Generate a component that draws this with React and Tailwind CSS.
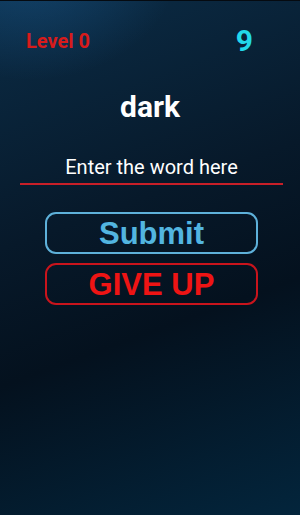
export default function App() {
    return (
        <div className="relative w-[300px] h-[515px] overflow-hidden bg-[linear-gradient(160deg,#0b2c46_0%,#07192a_40%,#04111e_62%,#03253c_100%)] font-['Roboto',sans-serif]">
            {/* top-left glow */}
            <div className="absolute -left-[120px] -top-[160px] w-[300px] h-[240px] rounded-full bg-[radial-gradient(closest-side,rgba(30,100,160,0.45),rgba(30,100,160,0))]" />
            <div className="absolute inset-x-0 top-0 h-px bg-[#050a10]" />

            <div className="relative flex flex-col">
                {/* header */}
                <div className="flex items-center justify-between pl-[26px] pr-[47px] pt-[26px] h-[56px]">
                    <span className="text-[20px] font-bold text-[#d81b1b] leading-none">Level 0</span>
                    <span className="text-[30px] font-bold text-[#22d8ea] leading-none">9</span>
                </div>

                {/* word */}
                <div className="mt-[36px] text-center text-[30px] font-bold text-white leading-none">dark</div>

                {/* input */}
                <div className="ml-[20px] mr-[17px] mt-[33px] border-b-2 border-[#c81f28] pb-[4px] text-center text-[20px] text-white leading-[24px]">
                    Enter the word here
                </div>

                {/* buttons */}
                <div className="flex flex-col gap-[9px] pl-[45px] pr-[42px] mt-[27px] font-['Liberation_Sans',Arial,sans-serif]">
                    <button className="h-[42px] rounded-[11px] border-2 border-[#5eb1da] text-[31px] font-bold text-[#52b5e0] leading-none">
                        Submit
                    </button>
                    <button className="h-[42px] rounded-[11px] border-2 border-[#c9141c] text-[31px] font-bold text-[#ee1414] leading-none">
                        GIVE UP
                    </button>
                </div>
            </div>
        </div>
    )
}
